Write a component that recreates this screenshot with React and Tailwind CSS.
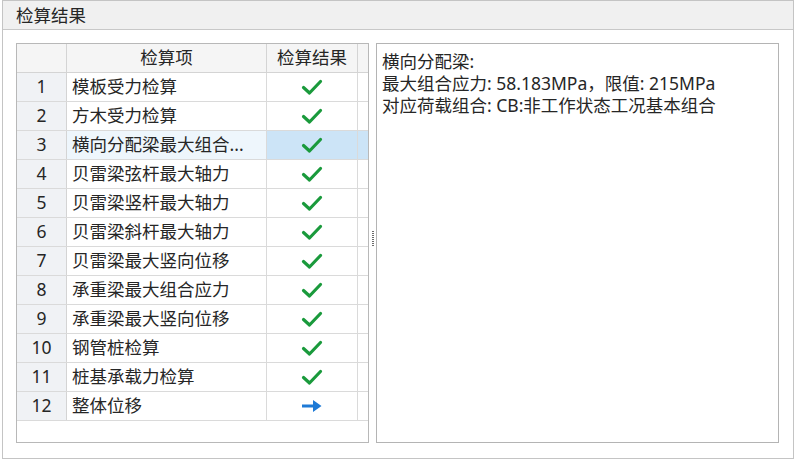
import React from "react";

const rows = [
  { name: "模板受力检算", ok: true },
  { name: "方木受力检算", ok: true },
  { name: "横向分配梁最大组合...", ok: true, selected: true },
  { name: "贝雷梁弦杆最大轴力", ok: true },
  { name: "贝雷梁竖杆最大轴力", ok: true },
  { name: "贝雷梁斜杆最大轴力", ok: true },
  { name: "贝雷梁最大竖向位移", ok: true },
  { name: "承重梁最大组合应力", ok: true },
  { name: "承重梁最大竖向位移", ok: true },
  { name: "钢管桩检算", ok: true },
  { name: "桩基承载力检算", ok: true },
  { name: "整体位移", ok: false },
];

function Check() {
  return (
    <svg width="22" height="17" viewBox="0 0 22 17">
      <path d="M2.5 8.5 L8.5 14 L19.5 2.5" fill="none" stroke="#1a9a3c" strokeWidth="3.2" strokeLinecap="round" strokeLinejoin="round" />
    </svg>
  );
}

function Arrow() {
  return (
    <svg width="22" height="14" viewBox="0 0 22 14">
      <path d="M1 5.6 H12 V1 L20.5 7 L12 13 V8.4 H1 Z" fill="#1e7ad6" />
    </svg>
  );
}

export default function App() {
  return (
    <div
      className="w-[795px] h-[460px] bg-white text-[#262626] font-normal"
      style={{ fontFamily: '"Noto Sans", "Noto Sans CJK SC", sans-serif' }}
    >
      <div className="ml-[2px] w-[792px] h-[459px] border border-[#c4c4c4] flex flex-col">
        {/* Title bar */}
        <div className="h-[29px] shrink-0 bg-[#f0f0f0] border-b border-[#c8c8c8] flex items-center pl-[13px] text-[17.5px]">
          检算结果
        </div>

        {/* Content */}
        <div className="flex pl-[13px] pt-[13px]">
          {/* Table */}
          <div className="w-[353px] h-[400px] border border-[#b8b8b8] bg-white text-[17.5px] leading-none">
            <div className="flex h-[29px] bg-[#f5f5f5] border-b border-[#d4d4d4]">
              <div className="w-[50px] border-r border-[#d4d4d4]" />
              <div className="w-[200px] border-r border-[#d4d4d4] flex items-center justify-center">检算项</div>
              <div className="w-[91px] border-r border-[#d4d4d4] flex items-center justify-center">检算结果</div>
              <div className="flex-1" />
            </div>
            {rows.map((r, i) => (
              <div key={i} className="flex h-[29px] border-b border-[#dadada]">
                <div className="w-[50px] bg-[#f0f2f5] border-r border-[#d4d4d4] flex items-center justify-center">
                  {i + 1}
                </div>
                <div
                  className={
                    r.selected
                      ? "w-[200px] bg-[#eef6fc] border-r border-[#dadada] flex items-center pl-[5px] whitespace-nowrap"
                      : "w-[200px] border-r border-[#dadada] flex items-center pl-[5px] whitespace-nowrap"
                  }
                >
                  {r.name}
                </div>
                <div
                  className={
                    r.selected
                      ? "w-[91px] bg-[#cce4f7] border-r border-[#dadada] flex items-center justify-center"
                      : "w-[91px] border-r border-[#dadada] flex items-center justify-center"
                  }
                >
                  {r.ok ? <Check /> : <Arrow />}
                </div>
                <div className={r.selected ? "flex-1 bg-[#cce4f7]" : "flex-1"} />
              </div>
            ))}
          </div>

          {/* Splitter */}
          <div className="w-[7px] h-[400px] flex items-center justify-center">
            <div className="w-[2px] h-[16px] mt-[-8px] bg-[repeating-linear-gradient(to_bottom,#6b6b6b_0px,#6b6b6b_1px,transparent_1px,transparent_2px)]" />
          </div>

          {/* Detail panel */}
          <div className="w-[403px] h-[400px] border border-[#b4b4b4] pl-[5px] pt-[6px] text-[17.5px] leading-[22px]">
            <div>横向分配梁:</div>
            <div>最大组合应力: 58.183MPa，限值: 215MPa</div>
            <div>对应荷载组合: CB:非工作状态工况基本组合</div>
          </div>
        </div>
      </div>
    </div>
  );
}
